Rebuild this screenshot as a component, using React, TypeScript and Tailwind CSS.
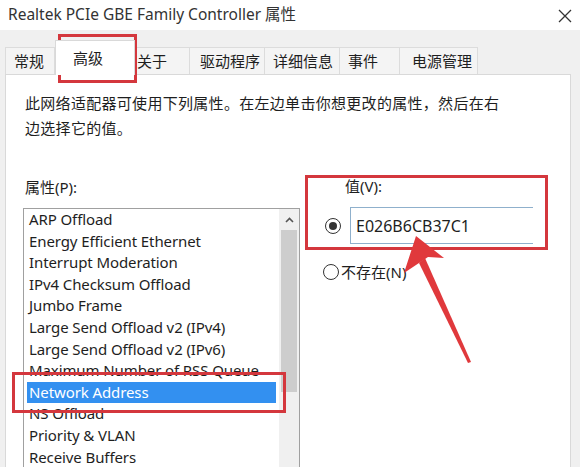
const tabs = [
  { label: '常规', w: 'w-[50px]', pl: 'pl-[8px]' },
  { label: '高级', w: 'w-[80px]', pl: 'pl-[17px]', active: true },
  { label: '关于', w: 'w-[55px]', pl: 'pl-[2px]' },
  { label: '驱动程序', w: 'w-[75px]', pl: 'pl-[10px]' },
  { label: '详细信息', w: 'w-[75px]', pl: 'pl-[8px]' },
  { label: '事件', w: 'w-[60px]', pl: 'pl-[8px]' },
  { label: '电源管理', w: 'w-[78px]', pl: 'pl-[12px]' },
]

const props = [
  'ARP Offload',
  'Energy Efficient Ethernet',
  'Interrupt Moderation',
  'IPv4 Checksum Offload',
  'Jumbo Frame',
  'Large Send Offload v2 (IPv4)',
  'Large Send Offload v2 (IPv6)',
  'Maximum Number of RSS Queue',
  'Network Address',
  'NS Offload',
  'Priority & VLAN',
  'Receive Buffers',
]

function Radio({ checked }: { checked?: boolean }) {
  return (
    <span className="flex h-[16px] w-[16px] shrink-0 items-center justify-center rounded-full border border-[#333] bg-white">
      {checked && <span className="h-[8px] w-[8px] rounded-full bg-[#333]" />}
    </span>
  )
}

export default function App() {
  return (
    <div className="relative h-[467px] w-[580px] overflow-hidden bg-[#f0f0f0] font-['Noto_Sans','Noto_Sans_CJK_SC',sans-serif] text-[#1e1e1e]">
      {/* title bar */}
      <div className="flex h-[30px] items-center justify-between bg-white pl-[8px] pr-[8px]">
        <span className="text-[15.5px] text-[#333]">Realtek PCIe GBE Family Controller 属性</span>
        <svg width="14" height="14" viewBox="0 0 14 14" className="mt-[1px]">
          <path d="M1 1 L13 13 M13 1 L1 13" stroke="#333" strokeWidth="1.3" />
        </svg>
      </div>

      {/* tabs */}
      <div className="flex h-[44px] items-end pl-[5px]">
        {tabs.map((t) =>
          t.active ? (
            <div
              key={t.label}
              className={`relative z-10 -mb-px flex h-[35px] items-center border border-b-0 border-[#d9d9d9] bg-white text-[15px] ${t.w} ${t.pl}`}
            >
              {t.label}
            </div>
          ) : (
            <div
              key={t.label}
              className={`flex h-[27px] items-center border border-b-0 border-l-0 border-[#dcdcdc] bg-[#f4f4f4] text-[15px] first:border-l ${t.w} ${t.pl}`}
            >
              {t.label}
            </div>
          ),
        )}
      </div>

      {/* panel */}
      <div className="ml-[5px] h-[400px] w-[566px] border border-[#d9d9d9] bg-white pt-[16px]">
        <p className="pl-[19px] text-[15px] leading-[25px] tracking-[0.3px]">
          此网络适配器可使用下列属性。在左边单击你想更改的属性，然后在右
          <br />
          边选择它的值。
        </p>

        <div className="mt-[36px] flex">
          {/* left column */}
          <div className="ml-[17px] w-[277px]">
            <div className="h-[20px] pl-[2px] text-[15px] leading-[20px]">属性(P):</div>
            <div className="mt-[11px] flex h-[300px] border border-[#a0a0a0] bg-white">
              <ul className="flex-1 text-[15px] tracking-[-0.1px]">
                {props.map((p, i) => (
                  <li
                    key={p}
                    className={`mx-[3px] h-[21.6px] overflow-hidden whitespace-nowrap pl-[2px] leading-[21px] ${
                      i === 8 ? 'bg-[#3390f0] text-white' : ''
                    }`}
                  >
                    {p}
                  </li>
                ))}
              </ul>
              <div className="flex w-[20px] flex-col bg-[#f0f0f0]">
                <div className="flex h-[21px] items-center justify-center">
                  <svg width="9" height="6" viewBox="0 0 9 6">
                    <path d="M1 5 L4.5 1.5 L8 5" fill="none" stroke="#555" strokeWidth="1.6" />
                  </svg>
                </div>
                <div className="mx-[2px] h-[162px] bg-[#cdcdcd]" />
              </div>
            </div>
          </div>

          {/* right column */}
          <div className="flex-1">
            <div className="h-[18px] pl-[45px] text-[15px] leading-[18px]">值(V):</div>
            <div className="mt-[12px] flex items-center pl-[25px]">
              <Radio checked />
              <div className="ml-[9px] flex h-[37px] w-[183px] items-center border border-r-0 border-[#8fb0cc] pl-[5px] text-[16px]">
                E026B6CB37C1
              </div>
            </div>
            <div className="mt-[17px] flex items-center pl-[23px] text-[15px]">
              <Radio />
              <span className="ml-[2px]">不存在(N)</span>
            </div>
          </div>
        </div>
      </div>

      {/* annotations */}
      <div className="absolute left-[58px] top-[34px] h-[49px] w-[79px] border-[3px] border-[#d4373d]" />
      <div className="absolute left-[12px] top-[372px] h-[41px] w-[274px] border-[3px] border-[#d4373d]" />
      <div className="absolute left-[305px] top-[175px] h-[75px] w-[243px] border-[3px] border-[#d4373d]" />
      <svg className="absolute left-0 top-0" width="580" height="467" viewBox="0 0 580 467">
        <path d="M425 258 L471 362 L468 363 L419 263 Z" fill="#e0393c" />
        <path d="M416 236 L444 258 L428 257 L404 273 Z" fill="#e0393c" />
      </svg>
    </div>
  )
}
